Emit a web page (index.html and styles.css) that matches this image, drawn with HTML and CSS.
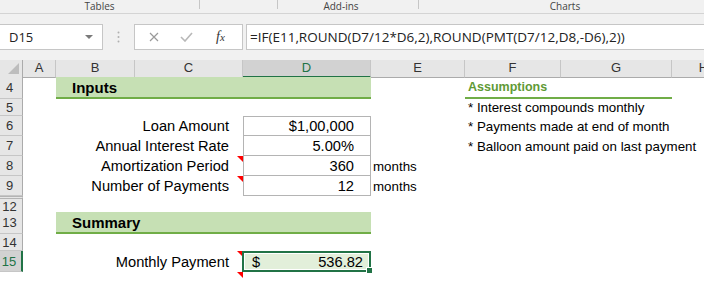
FILE: index.html
```html
<!DOCTYPE html>
<html lang="en">
<head>
    <meta charset="UTF-8">
    <title>Loan Payment</title>
    <link rel="stylesheet" href="styles.css">
</head>
<body>
    <div class="ribbon">
        <div class="group g-tables">Tables</div>
        <div class="group g-blank"></div>
        <div class="group g-addins">Add-ins</div>
        <div class="group g-charts">Charts</div>
    </div>

    <div class="formula-bar">
        <div class="name-box">D15 <span class="arrow"></span></div>
        <div class="grip">
            <svg width="3" height="12" viewBox="0 0 3 12"><circle cx="1.5" cy="1.5" r="1" fill="#b0b0b0"/><circle cx="1.5" cy="6" r="1" fill="#b0b0b0"/><circle cx="1.5" cy="10.5" r="1" fill="#b0b0b0"/></svg>
        </div>
        <div class="fx-box">
            <svg class="ico-x" width="10" height="10" viewBox="0 0 10 10"><path d="M1 1 L9 9 M9 1 L1 9" stroke="#9a9a9a" stroke-width="1.2" fill="none"/></svg>
            <svg class="ico-ok" width="13" height="10" viewBox="0 0 13 10"><path d="M1 5 L5 9 L12 1" stroke="#b8b8b8" stroke-width="1.6" fill="none"/></svg>
            <span class="fx">f<span class="fx-x">x</span></span>
        </div>
        <div class="formula">=IF(E11,ROUND(D7/12*D6,2),ROUND(PMT(D7/12,D8,-D6),2))</div>
    </div>

    <div class="sheet">
        <div class="row head">
            <div class="corner"><span class="corner-tri"></span></div>
            <div class="col">A</div>
            <div class="col">B</div>
            <div class="col">C</div>
            <div class="col col-sel">D</div>
            <div class="col">E</div>
            <div class="col">F</div>
            <div class="col">G</div>
            <div class="col">H</div>
        </div>

        <div class="row r4">
            <div class="num">4</div>
            <div class="bar">Inputs</div>
            <div class="assume-title">Assumptions</div>
        </div>
        <div class="row r5">
            <div class="num">5</div>
            <div class="note">* Interest compounds monthly</div>
        </div>
        <div class="row">
            <div class="num">6</div>
            <div class="label">Loan Amount</div>
            <div class="val val-first">$1,00,000</div>
            <div class="note">* Payments made at end of month</div>
        </div>
        <div class="row">
            <div class="num">7</div>
            <div class="label">Annual Interest Rate</div>
            <div class="val">5.00%</div>
            <div class="note">* Balloon amount paid on last payment</div>
        </div>
        <div class="row">
            <div class="num">8</div>
            <div class="label has-comment">Amortization Period</div>
            <div class="val">360</div>
            <div class="unit">months</div>
        </div>
        <div class="row">
            <div class="num">9</div>
            <div class="label has-comment">Number of Payments</div>
            <div class="val">12</div>
            <div class="unit">months</div>
        </div>

        <div class="row r12">
            <div class="num num-hidden">12</div>
        </div>
        <div class="row r13">
            <div class="num">13</div>
            <div class="bar">Summary</div>
        </div>
        <div class="row r14">
            <div class="num">14</div>
        </div>
        <div class="row r15">
            <div class="num num-sel">15</div>
            <div class="label has-comment">Monthly Payment</div>
            <div class="val-sel"><span>$</span><span>536.82</span></div>
        </div>
        <div class="row r16">
            <div class="num-off"></div>
            <div class="label has-comment"></div>
        </div>
    </div>
</body>
</html>
```

FILE: styles.css
```css
body {
    margin: 0;
    width: 704px;
    height: 284px;
    overflow: hidden;
    background: #fff;
    font-family: "Liberation Sans", Arial, sans-serif;
}

/* ribbon group labels */
.ribbon {
    display: flex;
    height: 13px;
    background: #f1f1f1;
    border-bottom: 1px solid #d4d4d4;
    font-family: "Open Sans", sans-serif;
    font-size: 10px;
    line-height: 12px;
    color: #444;
    overflow: hidden;
}

.group {
    height: 9px;
    text-align: center;
    border-right: 1px solid #c6c6c6;
    flex: none;
}

.g-tables { width: 199px; }
.g-blank { width: 77px; }
.g-addins { width: 141px; box-sizing: border-box; padding-right: 14px; }
.g-charts { width: 292px; border-right: none; }

/* formula bar */
.formula-bar {
    display: flex;
    height: 46px;
    box-sizing: border-box;
    padding-top: 10px;
    background: #f1f1f1;
    font-family: "Open Sans", sans-serif;
    font-size: 13.5px;
    color: #222;
}

.name-box,
.fx-box,
.formula {
    height: 26px;
    box-sizing: border-box;
    background: #fff;
    border: 1px solid #c6c6c6;
    display: flex;
    align-items: center;
}

.name-box {
    width: 103px;
    border-left: none;
    padding-left: 9px;
    position: relative;
    font-size: 13px;
}

.arrow {
    position: absolute;
    right: 9px;
    top: 10px;
    border-top: 4px solid #7a7a7a;
    border-left: 4px solid transparent;
    border-right: 4px solid transparent;
}

.grip {
    width: 31px;
    display: flex;
    justify-content: center;
    align-items: center;
    height: 26px;
}

.fx-box {
    width: 109px;
    padding-left: 14px;
}

.ico-ok { margin-left: 21px; }

.fx {
    margin-left: 23px;
    font-family: "Liberation Serif", serif;
    font-style: italic;
    font-size: 14px;
    color: #333;
}

.fx-x { font-size: 11px; }

.formula {
    flex: 1;
    margin-left: 3px;
    border-right: none;
    padding-left: 3px;
    white-space: nowrap;
}

/* worksheet grid */
.row {
    display: grid;
    grid-template-columns: 23px 33px 79px 108px 128px 94px 96px 111px 64px;
    height: 20px;
    font-size: 11pt;
    color: #000;
}

.head { height: 17px; background: #e6e6e6; }
.r4 { height: 22px; }
.r5 { height: 17px; }
.r12 { height: 16px; }
.r13 { height: 22px; }
.r14 { height: 17px; }
.r15 { height: 21px; }
.r16 { height: 12px; }

.corner,
.col {
    box-sizing: border-box;
    border-right: 1px solid #c6c6c6;
    border-bottom: 1px solid #ababab;
    font-size: 13px;
    color: #333;
    text-align: center;
    line-height: 16px;
}

.corner {
    display: flex;
    justify-content: flex-end;
    align-items: flex-end;
    border-right-color: #ababab;
}

.corner-tri {
    margin: 0 3px 3px 0;
    border-left: 11px solid transparent;
    border-bottom: 11px solid #bdbdbd;
}

.col-sel {
    background: #d2d2d2;
    color: #217346;
    border-bottom: 2px solid #217346;
}

.num {
    grid-column: 1;
    box-sizing: border-box;
    background: #e6e6e6;
    border-right: 1px solid #ababab;
    border-bottom: 1px solid #c6c6c6;
    font-size: 13px;
    color: #333;
    text-align: center;
    padding-right: 3px;
    display: flex;
    align-items: center;
    justify-content: center;
}

.num-hidden { border-top: 3px double #b4b4b4; }

.num-sel {
    background: #d2d2d2;
    color: #217346;
    border-right: 2px solid #217346;
}

.bar {
    grid-column: 3 / 6;
    box-sizing: border-box;
    background: #c6e0b4;
    border-bottom: 2px solid #70ad47;
    padding-left: 16px;
    font-size: 15px;
    font-weight: bold;
    display: flex;
    align-items: center;
}

.assume-title {
    grid-column: 7 / 9;
    box-sizing: border-box;
    border-bottom: 2px solid #70ad47;
    padding-left: 3px;
    font-size: 12.5px;
    font-weight: bold;
    color: #5f9a36;
    display: flex;
    align-items: center;
}

.note {
    grid-column: 7 / 10;
    padding-left: 3px;
    font-size: 10pt;
    white-space: nowrap;
    display: flex;
    align-items: center;
}

.label {
    grid-column: 3 / 5;
    position: relative;
    text-align: right;
    padding-right: 14px;
    white-space: nowrap;
    display: flex;
    align-items: center;
    justify-content: flex-end;
}

.has-comment::after {
    content: "";
    position: absolute;
    top: 0;
    right: 0;
    border-top: 6px solid #f00;
    border-left: 6px solid transparent;
}

.val {
    grid-column: 5;
    box-sizing: border-box;
    border: 1px solid #b4b4b4;
    border-top: none;
    padding-right: 16px;
    display: flex;
    align-items: center;
    justify-content: flex-end;
}

.val-first { border-top: 1px solid #b4b4b4; }

.unit {
    grid-column: 6;
    padding-left: 2px;
    font-size: 10pt;
    display: flex;
    align-items: center;
}

.val-sel {
    grid-column: 5;
    position: relative;
    box-sizing: border-box;
    margin-left: -1px;
    border: 2px solid #217346;
    box-shadow: inset 0 0 0 1px #fff;
    background: #e2efda;
    padding: 0 6px 0 8px;
    display: flex;
    align-items: center;
    justify-content: space-between;
}

.val-sel::after {
    content: "";
    position: absolute;
    right: -4px;
    bottom: -4px;
    width: 5px;
    height: 5px;
    background: #217346;
    border: 1px solid #fff;
}
```
